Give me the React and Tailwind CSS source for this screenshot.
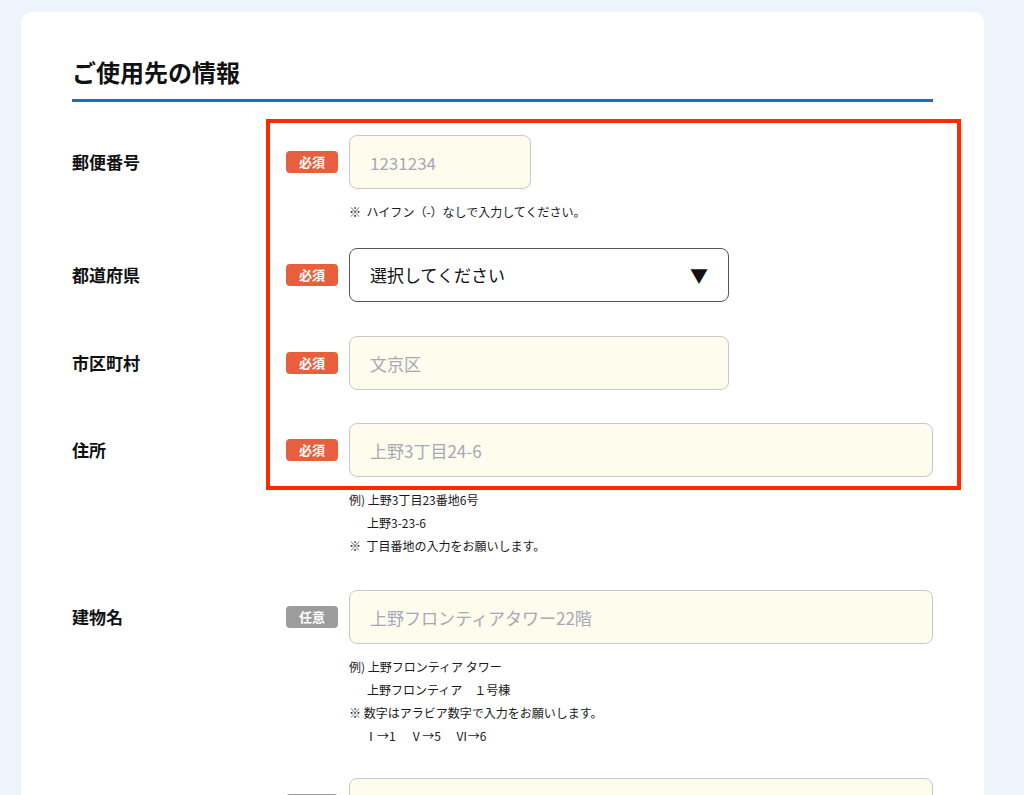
import React from "react";

const font = { fontFamily: '"Noto Sans CJK JP", "Noto Sans", sans-serif' };

const Badge = ({ required }) => (
  <span
    className={
      "inline-flex h-[22px] w-[52px] shrink-0 items-center justify-center rounded-[4px] text-[13px] font-bold text-white " +
      (required ? "bg-[#e85f3e]" : "bg-[#9c9c9c]")
    }
  >
    {required ? "必須" : "任意"}
  </span>
);

const Field = ({ label, required, children, notes }) => (
  <div className="flex items-start">
    <div className="flex h-[54px] w-[214px] shrink-0 items-center text-[17px] font-bold text-[#111]">
      {label}
    </div>
    <div className="flex h-[54px] w-[63px] shrink-0 items-center">
      <Badge required={required} />
    </div>
    <div className="flex-1">
      {children}
      {notes && (
        <div className="mt-[11px] text-[12px] leading-[23px] text-[#1a1a1a]">
          {notes}
        </div>
      )}
    </div>
  </div>
);

const TextInput = ({ placeholder, width }) => (
  <input
    type="text"
    placeholder={placeholder}
    className={
      "block h-[54px] rounded-[8px] border border-[#c9c9c9] bg-[#fefcec] px-[20px] text-[17px] text-[#333] outline-none placeholder:text-[#a3aab5] " +
      width
    }
    style={font}
  />
);

export default function App() {
  return (
    <div className="min-h-[795px] bg-[#edf4fc] pl-[21px] pt-[12px]" style={font}>
      <div className="relative w-[963px] rounded-t-[10px] bg-white px-[51px] pb-[40px] pt-[44px]">
        <h2 className="text-[24px] font-bold leading-[32px] text-[#111]">
          ご使用先の情報
        </h2>
        <div className="mt-[11px] h-[3px] w-full bg-[#1a70c0]"></div>

        <div className="mt-[33px] flex flex-col">
          <Field
            label="郵便番号"
            required
            notes={<p>※&nbsp;&nbsp;ハイフン（-）なしで入力してください。</p>}
          >
            <TextInput placeholder="1231234" width="w-[182px]" />
          </Field>

          <div className="mt-[25px]">
            <Field label="都道府県" required>
              <div className="flex h-[54px] w-[380px] items-center justify-between rounded-[8px] border border-[#555] bg-white pl-[20px] pr-[20px] text-[17px] text-[#111]">
                <span>選択してください</span>
                <span className="text-[18px]">▼</span>
              </div>
            </Field>
          </div>

          <div className="mt-[34px]">
            <Field label="市区町村" required>
              <TextInput placeholder="文京区" width="w-[380px]" />
            </Field>
          </div>

          <div className="mt-[33px]">
            <Field
              label="住所"
              required
              notes={
                <>
                  <p>例) 上野3丁目23番地6号</p>
                  <p className="pl-[18px]">上野3-23-6</p>
                  <p>※&nbsp;&nbsp;丁目番地の入力をお願いします。</p>
                </>
              }
            >
              <TextInput placeholder="上野3丁目24-6" width="w-full" />
            </Field>
          </div>

          <div className="mt-[33px]">
            <Field
              label="建物名"
              notes={
                <>
                  <p>例) 上野フロンティア タワー</p>
                  <p className="pl-[18px]">上野フロンティア　１号棟</p>
                  <p>※ 数字はアラビア数字で入力をお願いします。</p>
                  <p className="pl-[16px]">Ⅰ→1　&nbsp;Ⅴ→5　&nbsp;Ⅵ→6</p>
                </>
              }
            >
              <TextInput placeholder="上野フロンティアタワー22階" width="w-full" />
            </Field>
          </div>

          <div className="mt-[31px]">
            <Field label="">
              <TextInput placeholder="" width="w-full" />
            </Field>
          </div>
        </div>

        <div className="pointer-events-none absolute left-[245px] top-[107px] h-[371px] w-[695px] border-[4px] border-[#ff2a00]"></div>
      </div>
    </div>
  );
}
